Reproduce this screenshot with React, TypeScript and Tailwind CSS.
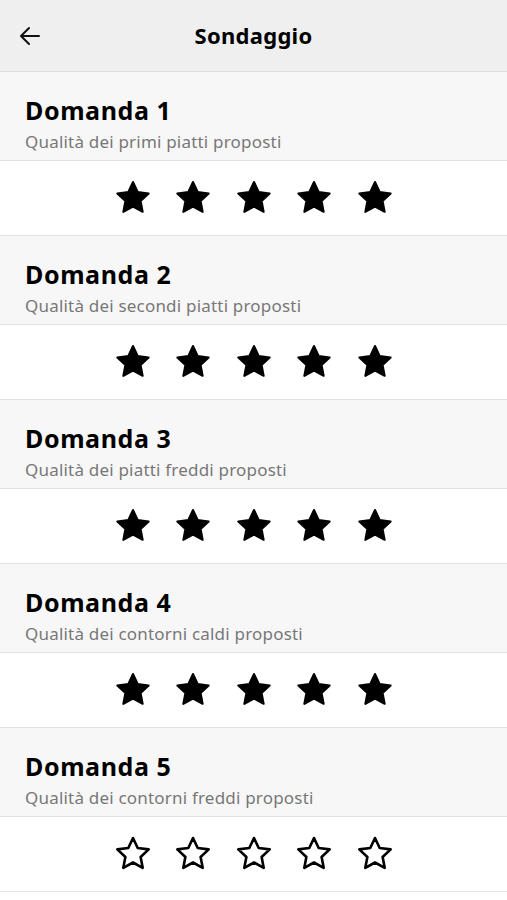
import React from "react";

const questions = [
  { title: "Domanda 1", sub: "Qualità dei primi piatti proposti", filled: true },
  { title: "Domanda 2", sub: "Qualità dei secondi piatti proposti", filled: true },
  { title: "Domanda 3", sub: "Qualità dei piatti freddi proposti", filled: true },
  { title: "Domanda 4", sub: "Qualità dei contorni caldi proposti", filled: true },
  { title: "Domanda 5", sub: "Qualità dei contorni freddi proposti", filled: false },
];

const STAR =
  "M18 2L22.7 12.03L33.69 13.4L25.61 20.97L27.7 31.85L18 26.5L8.3 31.85L10.39 20.97L2.31 13.4L13.3 12.03Z";

function Star({ filled }: { filled: boolean }) {
  return (
    <svg width="36" height="34" viewBox="0 0 36 34">
      <path
        d={STAR}
        fill={filled ? "#000" : "none"}
        stroke="#000"
        strokeWidth={filled ? 2 : 2.6}
        strokeLinejoin="round"
      />
    </svg>
  );
}

export default function App() {
  return (
    <div
      className="w-[507px] h-[900px] overflow-hidden bg-white text-black"
      style={{ fontFamily: "'Noto Sans', sans-serif" }}
    >
      <header className="h-[72px] bg-[#efefef] border-b border-[#dcdcdc] flex items-center relative">
        <div className="pl-[19px] flex items-center">
          <svg width="22" height="20" viewBox="0 0 22 20" fill="none" stroke="#111" strokeWidth="2" strokeLinecap="round" strokeLinejoin="round">
            <path d="M20 10H2.5M10 2L2 10l8 8" />
          </svg>
        </div>
        <div className="absolute inset-0 flex items-center justify-center pb-[1px]">
          <span className="text-[22px] font-bold tracking-[0.3px]">Sondaggio</span>
        </div>
      </header>
      {questions.map((q) => (
        <section key={q.title}>
          <div className="h-[89px] bg-[#f7f7f7] border-b border-[#e2e2e2] pl-[25px] pt-[23px]">
            <div className="text-[25px] font-bold leading-[30px] tracking-[0.6px]">{q.title}</div>
            <div className="text-[17px] text-[#777777] leading-[22px] tracking-[0.2px] mt-[6px]">{q.sub}</div>
          </div>
          <div className="h-[75px] bg-white border-b border-[#e2e2e2] flex items-center justify-center gap-[24.5px] pb-[2px]">
            {[0, 1, 2, 3, 4].map((i) => (
              <Star key={i} filled={q.filled} />
            ))}
          </div>
        </section>
      ))}
    </div>
  );
}
